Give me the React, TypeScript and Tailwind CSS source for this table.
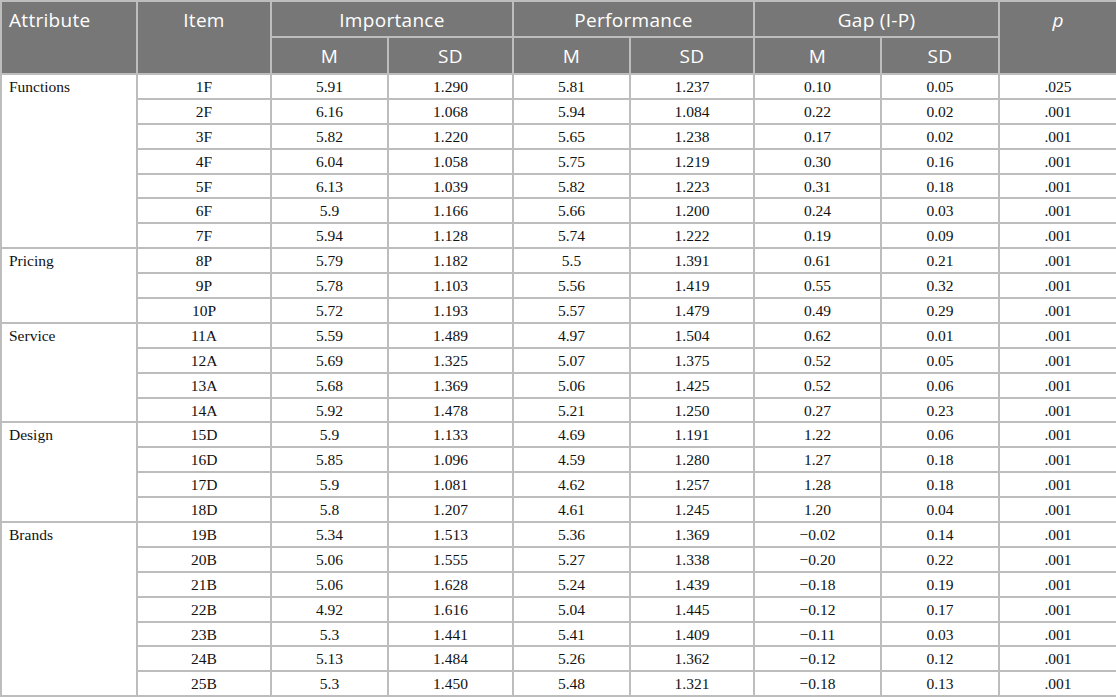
import React from "react";

type Row = [string, string, string, string, string, string, string, string];

const groups: { name: string; rows: Row[] }[] = [
  {
    name: "Functions",
    rows: [
      ["1F", "5.91", "1.290", "5.81", "1.237", "0.10", "0.05", ".025"],
      ["2F", "6.16", "1.068", "5.94", "1.084", "0.22", "0.02", ".001"],
      ["3F", "5.82", "1.220", "5.65", "1.238", "0.17", "0.02", ".001"],
      ["4F", "6.04", "1.058", "5.75", "1.219", "0.30", "0.16", ".001"],
      ["5F", "6.13", "1.039", "5.82", "1.223", "0.31", "0.18", ".001"],
      ["6F", "5.9", "1.166", "5.66", "1.200", "0.24", "0.03", ".001"],
      ["7F", "5.94", "1.128", "5.74", "1.222", "0.19", "0.09", ".001"],
    ],
  },
  {
    name: "Pricing",
    rows: [
      ["8P", "5.79", "1.182", "5.5", "1.391", "0.61", "0.21", ".001"],
      ["9P", "5.78", "1.103", "5.56", "1.419", "0.55", "0.32", ".001"],
      ["10P", "5.72", "1.193", "5.57", "1.479", "0.49", "0.29", ".001"],
    ],
  },
  {
    name: "Service",
    rows: [
      ["11A", "5.59", "1.489", "4.97", "1.504", "0.62", "0.01", ".001"],
      ["12A", "5.69", "1.325", "5.07", "1.375", "0.52", "0.05", ".001"],
      ["13A", "5.68", "1.369", "5.06", "1.425", "0.52", "0.06", ".001"],
      ["14A", "5.92", "1.478", "5.21", "1.250", "0.27", "0.23", ".001"],
    ],
  },
  {
    name: "Design",
    rows: [
      ["15D", "5.9", "1.133", "4.69", "1.191", "1.22", "0.06", ".001"],
      ["16D", "5.85", "1.096", "4.59", "1.280", "1.27", "0.18", ".001"],
      ["17D", "5.9", "1.081", "4.62", "1.257", "1.28", "0.18", ".001"],
      ["18D", "5.8", "1.207", "4.61", "1.245", "1.20", "0.04", ".001"],
    ],
  },
  {
    name: "Brands",
    rows: [
      ["19B", "5.34", "1.513", "5.36", "1.369", "\u22120.02", "0.14", ".001"],
      ["20B", "5.06", "1.555", "5.27", "1.338", "\u22120.20", "0.22", ".001"],
      ["21B", "5.06", "1.628", "5.24", "1.439", "\u22120.18", "0.19", ".001"],
      ["22B", "4.92", "1.616", "5.04", "1.445", "\u22120.12", "0.17", ".001"],
      ["23B", "5.3", "1.441", "5.41", "1.409", "\u22120.11", "0.03", ".001"],
      ["24B", "5.13", "1.484", "5.26", "1.362", "\u22120.12", "0.12", ".001"],
      ["25B", "5.3", "1.450", "5.48", "1.321", "\u22120.18", "0.13", ".001"],
    ],
  },
];

const th =
  "border-2 border-[#bdbdbd] bg-[#777777] text-white font-normal text-[19px] leading-[24px] tracking-[0.3px] text-center align-top p-0 pt-[6px]";
const td =
  "border-2 border-[#bdbdbd] text-center align-middle p-0 text-[15.5px] leading-[17px] text-[#111111]";

export default function App() {
  return (
    <div className="w-[1116px] h-[697px] bg-white overflow-hidden">
      <table
        className="w-[1116px] table-fixed border-collapse"
        style={{ fontFamily: "'Liberation Serif', 'Times New Roman', serif" }}
      >
        <colgroup>
          <col className="w-[136px]" />
          <col className="w-[134px]" />
          <col className="w-[117px]" />
          <col className="w-[125px]" />
          <col className="w-[117px]" />
          <col className="w-[124px]" />
          <col className="w-[127px]" />
          <col className="w-[118px]" />
          <col className="w-[118px]" />
        </colgroup>
        <thead style={{ fontFamily: "'Open Sans', 'Noto Sans', sans-serif" }}>
          <tr className="h-[36px]">
            <th rowSpan={2} className={`${th} text-left pl-[7px]`}>
              Attribute
            </th>
            <th rowSpan={2} className={th}>
              Item
            </th>
            <th colSpan={2} className={th}>
              Importance
            </th>
            <th colSpan={2} className={th}>
              Performance
            </th>
            <th colSpan={2} className={th}>
              Gap (I-P)
            </th>
            <th rowSpan={2} className={`${th} italic`}>
              p
            </th>
          </tr>
          <tr className="h-[37px]">
            <th className={th}>M</th>
            <th className={th}>SD</th>
            <th className={th}>M</th>
            <th className={th}>SD</th>
            <th className={th}>M</th>
            <th className={th}>SD</th>
          </tr>
        </thead>
        <tbody>
          {groups.map((g) =>
            g.rows.map((r, i) => (
              <tr key={r[0]} className="h-[24.9px]">
                {i === 0 && (
                  <td
                    rowSpan={g.rows.length}
                    className={`${td} text-left align-top pl-[7px] pt-[3px]`}
                  >
                    {g.name}
                  </td>
                )}
                {r.map((c, j) => (
                  <td key={j} className={td}>
                    {c}
                  </td>
                ))}
              </tr>
            ))
          )}
        </tbody>
      </table>
    </div>
  );
}
